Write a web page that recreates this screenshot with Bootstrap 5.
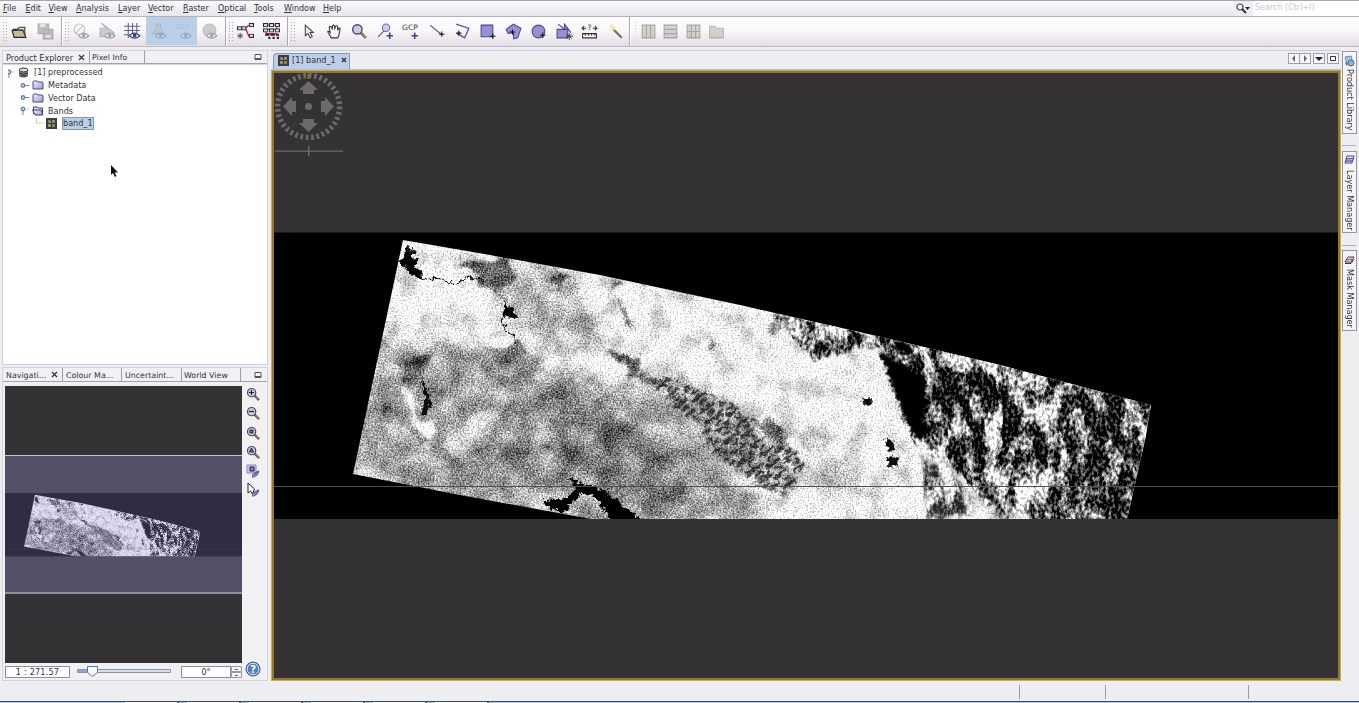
<!DOCTYPE html>
<html lang="en">
<head>
<meta charset="utf-8">
<title>[1] preprocessed</title>
<link href="https://cdn.jsdelivr.net/npm/bootstrap@5.3.0/dist/css/bootstrap.min.css" rel="stylesheet">
<style>
html,body{height:100%;overflow:hidden}
body{font:8.1px/12px "DejaVu Sans",sans-serif;color:#333138;background:#eeeef1}
svg{display:block;flex:none}
.menubar{height:16px;border-top:1px solid #a9a5ac;background:linear-gradient(#fbfafc,#e8e5eb);font-size:8px}
.menubar .entry{position:static;white-space:nowrap;line-height:15px}
.menubar .entry::first-letter{text-decoration:underline}
.finder{width:125px;height:15px;background:#fff;color:#c8c8d4}
.finder .glass{width:19px;background:#ededf2}
.tools{height:31px;border-top:1px solid #b5b2ba;border-bottom:1px solid #bdbac2;background:linear-gradient(#fdfcfd,#faf8fb 45%,#e2dde4)}
.seg{border-right:1px solid #aaa7af;box-shadow:1px 0 #fff;position:relative;overflow:visible}
.grip{width:5px;margin:4px 0 4px 2px;background:radial-gradient(circle,#a5a5ab 30%,transparent 45%) 0 0/3px 3px}
.slot{width:25.55px;height:28px}
.slot svg{width:17px;height:17px}
.slot.on{background:#bad0e9}
.off{opacity:.45}
.frame{border:1px solid #cdd5e4;background:#f1f1f4}
.tabrow{height:13px;border-bottom:1px solid #a3a2ab;line-height:14px}
.tabrow>div{border-right:1px solid #9f9da6;white-space:nowrap}
.tree{background:#fff;border-top:1px solid #d3d5de;padding:1px 0 0 5px}
.tree .line1{height:12.75px;white-space:nowrap}
.picked{background:#bccde8;border:1px solid #8298bd;line-height:11px}
.filetab{background:#bdcfe8;border:1px solid #8898b2;border-bottom:0;width:77px;height:16px;border-top-left-radius:4px;white-space:nowrap;padding-bottom:3px}
.ctl{width:12px;height:11px;border:1px solid #9ca0b4;background:#f5f6fa}
.canvas1{border:3px solid #91772f;outline:1px solid #c7ad50;outline-offset:-1px;background:#353235}
.vtab{width:15px;border:1px solid #9896a1;background:#f4f4f6;padding-top:3px}
.vtab span{writing-mode:vertical-rl;line-height:12px;white-space:nowrap}
.spacer1{width:14px;height:1px;background:#a8b1ca}
.field{height:12px;border:1px solid #8f8f9b;background:#fff;line-height:11px}
.status i{width:1px;height:14px;background:#969baa}
</style>
</head>
<body class="d-flex flex-column">
<svg width="0" height="0" class="position-absolute" aria-hidden="true">
<defs>
<linearGradient id="fold" x2="1" y2="1"><stop stop-color="#f0f0ff"/><stop offset="1" stop-color="#9b98dc"/></linearGradient>
<symbol id="folder" viewBox="0 0 12 10"><path d="M1 2q0-1 1-1h3l1 1h4q1 0 1 1v6H1z" fill="url(#fold)" stroke="#4c4a86"/></symbol>
<symbol id="folderopen" viewBox="0 0 12 10"><path d="M1.500 8V1h4l1 1h4v6" fill="#ddddf6" stroke="#3e3c62"/><path d="M.5 4H9l2 5H3z" fill="url(#fold)" stroke="#3e3c62"/></symbol>
<symbol id="band" viewBox="0 0 11 11"><rect width="11" height="11" fill="#3c3d42"/><path d="M2 2h3v3H2zM6 2h3v3H6zM2 6h3v3H2zM6 6h3v3H6z" fill="#82836c"/><path d="M7 2h1v2H7zM4 4h1v1H4zM2 7h2v1H2z" fill="#c9bd4d"/></symbol>
<symbol id="knob" viewBox="0 0 9 9"><circle cx="3" cy="4.500" r="1.700" fill="#dfe6f8" stroke="#6b7eae" stroke-width="1.400"/><path d="M5 4.500h4" stroke="#6b7eae"/></symbol>
<symbol id="knobv" viewBox="0 0 9 9"><circle cx="3" cy="3" r="1.700" fill="#dfe6f8" stroke="#6b7eae" stroke-width="1.400"/><path d="M3 5v4" stroke="#6b7eae"/><path d="M5 3h4" stroke="#c5c9d6"/></symbol>
<symbol id="mag" viewBox="0 0 16 16"><path d="m9 9 5 5" stroke="#6c5845" stroke-width="2.600"/><path d="m10 9.500 4 4" stroke="#c6a379"/><circle cx="6" cy="6" r="4.400" fill="#c9c9e4" stroke="#4a4a5c" stroke-width="1.300"/></symbol>
<symbol id="eye" viewBox="0 0 16 16"><path d="M5 12q4.500-5 10 0-5 4.500-10 0" fill="#eef" stroke="#39416d"/><circle cx="10" cy="11.800" r="1.700" fill="#39416d"/></symbol>
<symbol id="star" viewBox="0 0 7 7"><path d="M3.500 0v7M0 3.500h7M1 1l5 5M6 1 1 6" stroke="#333" stroke-width=".8"/></symbol>
<symbol id="node" viewBox="0 0 5 4"><rect x=".5" y=".5" width="4" height="3" fill="#dde" stroke="#223" /></symbol>
<symbol id="brush" viewBox="0 0 8 8"><path d="M0 7q0-4 7-6-1 5-5 6zM2 5l5-4" fill="#9795d2" stroke="#47477e" stroke-width=".8"/></symbol>

<!-- speckle of flat terrain -->
<filter id="land" filterUnits="userSpaceOnUse" x="340" y="230" width="830" height="295" color-interpolation-filters="sRGB">
<feTurbulence type="fractalNoise" baseFrequency=".045" numOctaves="5" seed="7" result="w"/>
<feDisplacementMap in="SourceGraphic" in2="w" scale="26" xChannelSelector="R" yChannelSelector="G" result="b"/>
<feColorMatrix in="w" values="0 0 1.7 0 -.35  0 0 1.7 0 -.35  0 0 1.7 0 -.35  0 0 0 0 1" result="m"/>
<feTurbulence type="fractalNoise" baseFrequency=".6" numOctaves="2" seed="3"/>
<feColorMatrix values="1.9 0 0 0 -.45  1.9 0 0 0 -.45  1.9 0 0 0 -.45  0 0 0 0 1" result="n"/>
<feComposite in="b" in2="m" operator="arithmetic" k2="1" k3=".8" k4="-.4" result="c"/>
<feComposite in="b" in2="n" operator="arithmetic" k2="1" k3="1" k4="-.5" result="d"/>
<feComposite in="c" in2="d" operator="arithmetic" k2=".5" k3=".56"/>
</filter>
<!-- streaked mountains -->
<filter id="peaks" filterUnits="userSpaceOnUse" x="600" y="230" width="570" height="295" color-interpolation-filters="sRGB">
<feTurbulence type="fractalNoise" baseFrequency=".065 .032" numOctaves="6" seed="31" result="w"/>
<feDisplacementMap in="SourceGraphic" in2="w" scale="30" xChannelSelector="R" yChannelSelector="B" result="b"/>
<feColorMatrix in="w" values="0 3 0 0 -1  0 3 0 0 -1  0 3 0 0 -1  0 0 0 0 1" result="m"/>
<feComposite in="b" in2="m" operator="arithmetic" k2="1" k3="1" k4="-.5" result="c"/>
<feTurbulence type="fractalNoise" baseFrequency=".33 .22" numOctaves="3" seed="5"/>
<feColorMatrix values="2.4 0 0 0 -.7  2.4 0 0 0 -.7  2.4 0 0 0 -.7  0 0 0 0 1" result="n"/>
<feComposite in="c" in2="n" operator="arithmetic" k2="1" k3=".75" k4="-.36" result="d"/>
<feComposite in="d" in2="b" operator="in"/>
</filter>
<filter id="rough" x="-20%" y="-20%" width="140%" height="140%"><feTurbulence type="fractalNoise" baseFrequency=".2" numOctaves="3" seed="2"/><feDisplacementMap in="SourceGraphic" scale="9" xChannelSelector="R" yChannelSelector="G"/></filter>
<filter id="b1"><feGaussianBlur stdDeviation=".9"/></filter>
<filter id="b3" x="-50%" y="-50%" width="200%" height="200%"><feGaussianBlur stdDeviation="2.500"/></filter>
<filter id="b9" x="-50%" y="-50%" width="200%" height="200%"><feGaussianBlur stdDeviation="8"/></filter>
<pattern id="ridges" width="37" height="13" patternUnits="userSpaceOnUse" patternTransform="rotate(-38)"><path d="M0 2h21M26 3h8M6 8.500h9M19 9h18" stroke="#0c0c0c" stroke-width="3.600"/></pattern>
<clipPath id="swath"><path d="M403 240 490 255 600 275 740 305 877 336 1000 365 1151 405 1145 440 1127 519H591L460 495 353 474Z"/></clipPath>
<g id="scene">
<rect x="200" y="232.500" width="1200" height="286.500"/>
<g clip-path="url(#swath)">
<g filter="url(#land)">
<rect x="330" y="220" width="850" height="310" fill="#eee"/>
<g filter="url(#b9)">
<path d="M370 350 405 335 450 345 520 350 570 372 640 392 690 420 735 480 780 525 590 525 480 505 340 480Z" fill="#9c9c9c"/>
<path d="M465 255 570 268 590 300 600 350 540 345 500 300Z" fill="#b0b0b0"/>
<path d="M530 385 600 395 660 450 700 500 640 525 560 460Z" fill="#747474"/>
<path d="M450 345 540 355 530 380 450 365ZM420 430 520 425 550 490 470 480ZM380 445 435 440 410 465Z" fill="#848484"/>
<path d="M800 420 830 450 870 490 820 500Z" fill="#b8b8b8"/>
<path d="M625 375 700 385 760 420 795 455 795 490 730 475 680 420Z" fill="#b4b4b4"/>
</g>
<g filter="url(#b3)">
<path d="M488 345 513 343 530 358 505 362ZM455 258 505 258 515 282 482 286Z" fill="#5e5e5e"/>
<path d="M398 360 440 354 425 372 408 384ZM608 356 637 350 642 376 624 366ZM550 276 573 273 565 290ZM538 445 548 445 550 460Z" fill="#484848"/>
<path d="M404 395 414 393 417 423 438 427 430 440 412 438Z" fill="#fff"/>
<path d="M440 440 490 405 500 415 455 470Z" fill="#c4c4c4"/>
<path d="M750 420 785 428 782 445 762 443Z" fill="#555"/>
<path d="M618 305l17 6-4 22-6-8ZM704 336h5l5 10-8-1ZM770 308l9 6 1 24-5-8ZM605 275l14 4-8 6ZM640 282h7v8zM380 400l6 2-3 12zM630 372l26 4 8 14-14-3Z" fill="#555"/>
</g>
</g>
<g filter="url(#peaks)">
<path d="M777 316Q822 322 880 339L890 352 850 347 815 356 785 335ZM873 338 903 370 914 438 945 460 985 500 1030 519 1032 530H1160L1180 410 1110 375 880 312Z" fill="#6e6e6e" filter="url(#b1)"/>
<path d="M920 340 945 345 940 390 925 376ZM945 362 979 360 996 390 984 436 955 412ZM1003 395 1016 390 1028 455 1013 480 1000 440ZM955 435 980 448 987 482 960 453Z" fill="#222" filter="url(#b3)"/>
<path d="M994 397 1005 405 1002 460 989 445ZM1036 376 1046 385 1054 428 1042 420ZM1059 435 1074 440 1070 480 1058 475ZM1028 455 1040 470 1046 515 1025 515ZM910 342 923 346 925 361ZM960 462 1000 495 1015 519 985 505ZM975 350 1050 372 1045 385 990 372Z" fill="#c4c4c4" filter="url(#b3)"/>
<path d="M1080 385 1128 390 1135 450 1125 530H1065L1070 440Z" fill="#282828" filter="url(#b3)"/>
<path d="M920 455 944 462 960 484 975 519H925L930 490Z" fill="#888" opacity=".85" filter="url(#b3)"/>
</g>
<g filter="url(#rough)">
<g filter="url(#b1)"><path d="M648 379 670 377 702 391 732 403 758 420 752 432 772 448 792 445 805 465 790 496 765 490 740 471 714 455 702 425 675 408Z" fill="url(#ridges)"/></g>
<path d="M878 351 900 362 926 377 927 400 924 418 929 430 920 441 905 422 899 402 889 378ZM893 340 906 342 914 356 898 350Z" fill="#060606" filter="url(#b1)"/>
<path d="M885 438 893 441 895 450 888 452ZM888 456 899 458 897 466 889 465ZM862 397 870 398 873 406 864 405Z" fill="#0a0a0a" stroke="#444"/>
<path d="M409 245 410 253 414 250 413 259 418 262 414 266 421 272 411 269 401 263 405 252ZM405 266 420 272 423 279 410 273Z" fill="#000" stroke="#111"/>
<path d="M423 279 438 278 452 284 470 278 483 279" fill="none" stroke="#111" stroke-width="1.300"/><path d="M483 279 491 289 507 300" fill="none" stroke="#444" stroke-width=".8"/><path d="M507 304 503 319 505 331 515 335 516 345" fill="none" stroke="#111" stroke-width="1.300"/>
<path d="M506 304 512 309 516 317 505 316Z" fill="#000" stroke="#000" stroke-width="2"/>
<path d="M420 376 429 392 430 405 427 416 421 415 425 400Z" fill="#080808"/>
<path d="M570 478 577 484 590 487 607 494 642 521 615 522 595 496 580 491 575 499 566 504 568 511 547 507 545 501 562 500 572 496 578 490Z" fill="#000" stroke="#000" stroke-width="2"/>
<path d="M585 475 589 464 600 457" fill="none" stroke="#222"/>
</g>
<path d="M399 466 430 442M790 425 805 450 830 475M750 405 780 412" fill="none" stroke="#ddd" stroke-width="1.500" opacity=".6" filter="url(#rough)"/>
</g>
<path d="M200 486.500h1200" stroke="#505052"/>
</g>
</defs>
</svg>

<nav class="menubar d-flex flex-shrink-0 position-relative">
<div class="entry" style="margin-left:3px;width:22.500px">File</div><div class="entry" style="width:23px">Edit</div><div class="entry" style="width:27.500px">View</div><div class="entry" style="width:42px">Analysis</div><div class="entry" style="width:30px">Layer</div><div class="entry" style="width:35px">Vector</div><div class="entry" style="width:35px">Raster</div><div class="entry" style="width:36px">Optical</div><div class="entry" style="width:30px">Tools</div><div class="entry" style="width:39px">Window</div><div class="entry">Help</div>
<div class="finder d-flex ms-auto"><div class="glass"><svg width="18" height="15"><path d="m8 8 4 4" stroke="#333" stroke-width="2"/><circle cx="6" cy="6" r="3" fill="#f0f0ff" stroke="#444" stroke-width="1.200"/><path d="M11 6h5l-2.500 3z" fill="#222"/></svg></div><span style="line-height:14px;padding-left:2px">Search (Ctrl+I)</span></div>
</nav>

<div class="tools d-flex flex-shrink-0">
<div class="seg d-flex" style="width:62px"><div class="grip" style="width:5px"></div>
<div class="slot d-flex align-items-center justify-content-center"><svg viewBox="0 0 16 16"><path d="M2 6h4l2-2h5v9H3z" fill="#eee5cf" stroke="#333"/><path d="m1 7 10-.500 3 7H3z" fill="#c9bb98" stroke="#222"/></svg></div>
<div class="slot d-flex align-items-center justify-content-center off"><svg viewBox="0 0 16 16"><path d="M1 1h10v9H1zM6 6h9v9H6z" fill="#777" stroke="#555"/><path d="M3 1h5v3H3zM8 11h5v3H8z" fill="#ccc"/></svg></div></div>
<div class="seg d-flex" style="width:164px"><div class="grip"></div>
<div class="slot d-flex align-items-center justify-content-center off"><svg viewBox="0 0 16 16"><circle cx="6" cy="6" r="5" fill="none" stroke="#777"/><path d="m2 10 8-8" stroke="#777"/><use href="#eye"/></svg></div>
<div class="slot d-flex align-items-center justify-content-center off"><svg viewBox="0 0 16 16"><path d="M1 5h6L2 0l12 9v4H1z" fill="#999" stroke="#666"/><use href="#eye"/></svg></div>
<div class="slot d-flex align-items-center justify-content-center"><svg viewBox="0 0 16 16"><path d="M4 0v14M8 0v14M12 0v10M0 3h15M0 7h15M0 11h7" stroke="#5c628d"/><use href="#eye"/></svg></div>
<div class="slot on d-flex align-items-center justify-content-center"><svg class="off" viewBox="0 0 16 16"><path d="M6 1h4v4l3 5H2l4-5z" fill="#c8bfb0" stroke="#999"/><use href="#eye" opacity=".6"/></svg></div>
<div class="slot on d-flex align-items-center justify-content-center"><svg class="off" viewBox="0 0 16 16"><text x="0" y="6" font-size="6.500" fill="#aa9c8e">GCP</text><use href="#eye" opacity=".6"/></svg></div>
<div class="slot d-flex align-items-center justify-content-center off"><svg viewBox="0 0 16 16"><circle cx="8" cy="7" r="6" fill="#999" stroke="#777"/><use href="#eye"/></svg></div></div>
<div class="seg d-flex" style="width:62px"><div class="grip"></div>
<div class="slot d-flex align-items-center justify-content-center"><svg viewBox="0 0 16 16"><path d="M5 5h3l3-3M8 5l3 7h2" fill="none" stroke="#c22b32" stroke-width="1.300"/><use href="#node" y="3" width="5" height="4"/><use href="#node" x="4" y="3" width="5" height="4"/><use href="#node" x="11" width="5" height="4"/><use href="#node" x="11" y="10" width="5" height="4"/><use href="#star" x="0" y="9" width="6" height="6"/></svg></div>
<div class="slot d-flex align-items-center justify-content-center"><svg viewBox="0 0 16 16"><path d="M3 2h10v4H3v4h10" fill="none" stroke="#c22b32"/><g id="nr"><use href="#node" width="5" height="4"/><use href="#node" x="5.500" width="5" height="4"/><use href="#node" x="11" width="5" height="4"/></g><use href="#nr" y="5"/><g fill="#222"><path d="M2 10h4v2H2zM7 10h4v2H7zM12 10h3v2h-3zM5 13h2v2H5zM9 13h2v2H9zM13 13h2v2h-2z"/></g></svg></div></div>
<div class="seg d-flex" style="width:342px"><div class="grip" style="width:6px"></div>
<div class="slot d-flex align-items-center justify-content-center"><svg viewBox="0 0 16 16"><path d="M5 2v10l2.500-2 2 4 2-1-2-4h3z" fill="#eee" stroke="#444"/></svg></div>
<div class="slot d-flex align-items-center justify-content-center"><svg viewBox="0 0 16 16"><path d="M5 14 2 9q-1-2 1-1l1 1-1-5q1-2 2 0l1 2V3q1-2 2 0v3l1-3q2-1 2 1v3l1-2q2-1 1 2l-1 5-1 2z" fill="#fff" stroke="#333"/></svg></div>
<div class="slot d-flex align-items-center justify-content-center"><svg><use href="#mag" width="17" height="17"/></svg></div>
<div class="slot d-flex align-items-center justify-content-center"><svg viewBox="0 0 16 16"><path d="m1 13 6-6" stroke="#555"/><circle cx="8.500" cy="4.500" r="3.500" fill="#c9c9f3" stroke="#6e6cab"/><path d="M12 9v6M9 12h6" stroke="#44428a" stroke-width="1.400"/></svg></div>
<div class="slot d-flex align-items-center justify-content-center"><svg viewBox="0 0 16 16"><text x="0" y="6.500" font-size="7" textLength="15" lengthAdjust="spacingAndGlyphs" fill="#333">GCP</text><path d="M12 9v6M9 12h6" stroke="#44428a" stroke-width="1.400"/></svg></div>
<div class="slot d-flex align-items-center justify-content-center"><svg viewBox="0 0 16 16"><path d="m2 2 11 9" stroke="#5553a0" stroke-width="1.200"/><path d="M13 8v5M10.500 10.500h5" stroke="#111"/></svg></div>
<div class="slot d-flex align-items-center justify-content-center"><svg viewBox="0 0 16 16"><path d="m2 1 12 4-4 9-7-4" fill="none" stroke="#5553a0" stroke-width="1.200"/><path d="M4.500 7v5M2 9.500h5" stroke="#111"/></svg></div>
<div class="slot d-flex align-items-center justify-content-center"><svg viewBox="0 0 16 16"><path d="M2 2h11v11H2z" fill="#9692d2" stroke="#4b4895"/><path d="M13 10v5M10.500 12.500h5" stroke="#111"/></svg></div>
<div class="slot d-flex align-items-center justify-content-center"><svg viewBox="0 0 16 16"><path d="m1 6 7-5 7 4-3 9-4 1V9L3 10z" fill="#9692d2" stroke="#4b4895"/><path d="M7 6v5M4.500 8.500h5" stroke="#111"/></svg></div>
<div class="slot d-flex align-items-center justify-content-center"><svg viewBox="0 0 16 16"><circle cx="8" cy="8" r="6" fill="#9692d2" stroke="#4b4895"/><path d="M12 9v5M9.500 11.500h5" stroke="#111"/></svg></div>
<div class="slot d-flex align-items-center justify-content-center"><svg viewBox="0 0 16 16"><path d="M1 6h10v8H1zM2 1l6 5V1l6 8" fill="#9692d2" stroke="#4b4895"/><use href="#star" x="9" y="9" width="7" height="7"/></svg></div>
<div class="slot d-flex align-items-center justify-content-center"><svg viewBox="0 0 16 16"><path d="M1 5h4M11 5h4M3 3 1 5l2 2M13 3l2 2-2 2M1.500 10h13v4h-13z" fill="#fff" stroke="#333"/><path d="M4 10v2M7 10v2M10 10v2M13 10v2" stroke="#333"/><text x="6" y="7" font-size="7" fill="#222">?</text></svg></div>
<div class="slot d-flex align-items-center justify-content-center"><svg viewBox="0 0 16 16"><path d="m6 6 8 8" stroke="#77766c" stroke-width="2"/><path d="M5 1v7M2 4.500h6M3 2l4 5" stroke="#eee486"/></svg></div></div>
<div class="d-flex off"><div class="grip ms-1 me-0" style="width:3px"></div>
<div class="slot d-flex align-items-center justify-content-center" style="width:22.600px"><svg viewBox="0 0 16 16"><path d="M2 2h12v12H2zM6 2v12M10 2v12" fill="#aaa58f" stroke="#444"/></svg></div><div class="slot d-flex align-items-center justify-content-center" style="width:22.600px"><svg viewBox="0 0 16 16"><path d="M2 2h12v12H2zM2 6h12M2 10h12" fill="#aaa58f" stroke="#444"/></svg></div><div class="slot d-flex align-items-center justify-content-center" style="width:22.600px"><svg viewBox="0 0 16 16"><path d="M2 2h12v12H2zM2 8h12M6 2v12M10 2v12" fill="#aaa58f" stroke="#444"/></svg></div><div class="slot d-flex align-items-center justify-content-center" style="width:22.600px"><svg viewBox="0 0 16 16"><path d="M1.500 3h5l1 2h7v9h-13z" fill="#aaa58f" stroke="#666"/></svg></div></div>
</div>

<main class="d-flex flex-grow-1" style="padding:3px 2px 2px 2px;min-height:0">
<aside class="d-flex flex-column" style="width:266px">
<section class="frame d-flex flex-column" style="height:315px">
<div class="tabrow d-flex"><div class="d-flex" style="width:87px;padding-left:3px"><span>Product Explorer</span><svg class="ms-auto me-1" width="7" height="12"><path d="m1 4 5 5M6 4 1 9" stroke="#333" stroke-width="1.200"/></svg></div><div style="width:55px;padding-left:2px;font-size:7.800px">Pixel Info</div><svg class="ms-auto me-1" width="9" height="12"><path d="M1 3.500h6v5H1zM1 7.500h6" fill="#fff" stroke="#555"/></svg></div>
<div class="tree flex-grow-1 mt-auto">
<div class="line1 d-flex align-items-center"><svg width="10" height="12"><use href="#knobv" x="-2" y="3" width="9" height="9"/></svg><svg width="11" height="11"><ellipse cx="5.500" cy="8" rx="4.500" ry="2.500" fill="#555"/><path d="M1 3v5h9V3" fill="#888"/><ellipse cx="5.500" cy="3" rx="4.500" ry="2" fill="#d8d8dd" stroke="#333"/><path d="M1 6q4 3 9 0" fill="none" stroke="#222"/></svg><span style="margin-left:5px">[1] preprocessed</span></div>
<div class="line1 d-flex align-items-center" style="padding-left:12px"><svg width="9" height="9"><use href="#knob"/></svg><svg width="12" height="10" style="margin-left:3px"><use href="#folder"/></svg><span style="margin-left:4px">Metadata</span></div>
<div class="line1 d-flex align-items-center" style="padding-left:12px"><svg width="9" height="9"><use href="#knob"/></svg><svg width="12" height="10" style="margin-left:3px"><use href="#folder"/></svg><span style="margin-left:4px">Vector Data</span></div>
<div class="line1 d-flex align-items-center" style="padding-left:12px"><svg width="9" height="9"><use href="#knobv"/></svg><svg width="12" height="10" style="margin-left:3px"><use href="#folderopen"/></svg><span style="margin-left:4px">Bands</span></div>
<div class="line1 d-flex align-items-center" style="padding-left:28px"><svg width="8" height="10"><path d="M.500 0v5h7" fill="none" stroke="#c9c9d2"/></svg><svg width="11" height="11" style="margin-left:2px"><use href="#band"/></svg><span class="picked" style="margin-left:5px">band_1</span></div>
</div></section>
<section class="frame d-flex flex-column flex-grow-1" style="margin-top:2px">
<div class="tabrow d-flex" style="font-size:7.900px;height:14px;line-height:15px"><div class="d-flex" style="width:60px;padding-left:3px">Navigati...<svg class="ms-auto me-1" width="7" height="13"><path d="m1 4 5 5M6 4 1 9" stroke="#333" stroke-width="1.200"/></svg></div><div style="width:59px;padding-left:3px">Colour Ma...</div><div style="width:60px;padding-left:3px">Uncertaint...</div><div style="width:59px;padding-left:2px">World View</div><svg class="ms-auto me-1" width="9" height="13"><path d="M1 4.500h6v5H1zM1 8.500h6" fill="#fff" stroke="#555"/></svg></div>
<div class="d-flex" style="padding:4px 0 0 2px">
<svg width="237" height="277" viewBox="5 386 237 277"><rect x="5" y="386" width="237" height="277" fill="#353235"/><use href="#scene" transform="translate(-53.900 441.900) scale(.2206)"/><rect x="5" y="456" width="237" height="137" fill="#a096dc" opacity=".3"/><path d="M5 455.500h237" stroke="#c5c3ce"/><path d="M5 593h237" stroke="#8f8c9e" stroke-width="2"/></svg>
<div class="d-flex flex-column" style="padding:1px 0 0 4px;gap:4.300px">
<svg width="15" height="15"><use href="#mag"/><path d="M5.500 3v5M3 5.500h5" stroke="#222" stroke-width="1.200"/></svg>
<svg width="15" height="15"><use href="#mag"/><path d="M3 5.500h5" stroke="#222" stroke-width="1.200"/></svg>
<svg width="15" height="15"><use href="#mag"/><path d="M4 4h3v3H4z" fill="#778" stroke="#224"/></svg>
<svg width="15" height="15"><use href="#mag"/><path d="m3.500 7 2-4 2 4z" fill="#778" stroke="#224"/></svg>
<svg width="15" height="15"><path d="M1 1h9v8H1z" fill="#c7c7ec" stroke="#8987c2"/><path d="M4 3h4v4H4z" fill="#888ab1" stroke="#223"/><use href="#brush" x="6" y="6" width="8" height="8"/></svg>
<svg width="15" height="15"><path d="M2 0v10l2.500-2 2 3 2-5z" fill="#fff" stroke="#222"/><use href="#brush" x="6" y="6" width="8" height="8"/></svg>
</div></div>
<div class="d-flex" style="padding:3px 3px 0 2px"><div class="field text-center" style="width:65px;letter-spacing:.2px">1 : 271.57</div>
<svg width="95" height="13" style="margin:-1px 0 0 7px"><path d="M.500 4.500h93v3H.5z" fill="#d9dfeb" stroke="#8c94aa"/><path d="M1 6h14" stroke="#8fa9d2" stroke-width="2"/><path d="M10.500 1.500h10v6l-5 4-5-4z" fill="#f4f7fc" stroke="#65748f"/></svg>
<div class="field text-center" style="width:50px;margin-left:9px">0°</div><svg width="11" height="12"><path d="M.500.500h10v5H.5zM.500 6.500h10v5H.5z" fill="#f2f2f7" stroke="#999bab"/><path d="M4 3.500h3M4 9.500h3" stroke="#667"/></svg>
<svg width="16" height="16" style="margin:-5px 0 0 3px"><circle cx="8" cy="8" r="7" fill="#557fb8" stroke="#385887"/><circle cx="8" cy="8" r="5.800" fill="none" stroke="#d9e6f7"/><text x="5.200" y="11.700" font-size="10" font-weight="bold" fill="#fff">?</text></svg></div>
</section></aside>

<section class="d-flex flex-column" style="width:1070px;margin-left:3px;border-top:1px solid #c1cedd">
<div class="d-flex" style="height:19px;padding-top:2px;border-bottom:1px solid #afbcd1">
<div class="filetab d-flex align-items-center" style="margin-left:2px"><svg width="11" height="11" style="margin-left:4px"><use href="#band"/></svg><span style="margin-left:3px">[1] band_1</span><svg width="6" height="8" style="margin-left:5px"><path d="m1 2 4 4M5 2 1 6" stroke="#333" stroke-width="1.400"/></svg></div>
<div class="d-flex ms-auto" style="padding-right:2px"><div class="ctl"><svg width="10" height="9"><path d="m6 1-3 3.500 3 3.500z" fill="#666"/></svg></div><div class="ctl" style="margin-left:-1px"><svg width="10" height="9"><path d="m4 1 3 3.500-3 3.500z" fill="#666"/></svg></div><div class="ctl" style="margin-left:2px"><svg width="10" height="9"><path d="M1 3h8L5 7z" fill="#222"/></svg></div><div class="ctl" style="margin-left:2px"><svg width="10" height="9"><path d="M2.500 2.500h5v4h-5z" fill="#fff" stroke="#333"/></svg></div></div></div>
<div class="canvas1 flex-grow-1"><svg width="100%" height="100%" viewBox="274 73 1064 605" preserveAspectRatio="xMinYMin slice">
<use href="#scene"/>
<g fill="#6c6b6b"><circle cx="308.500" cy="106.500" r="31" fill="none" stroke="#6c6b6b" stroke-width="5.500" stroke-dasharray="2.700 2.710"/><path id="arr" d="m308.500 81 9.500 9h-4v4h-11v-4h-4z"/><use href="#arr" transform="rotate(90 308.500 106.500)"/><use href="#arr" transform="rotate(180 308.500 106.500)"/><use href="#arr" transform="rotate(270 308.500 106.500)"/><circle cx="308.500" cy="106.500" r="3.600"/><path d="M275 150.500h68v1.200h-68zM308 146h1.500v10H308z"/><path d="M307.500 74h2v5h-2z" fill="#8a722a"/></g></svg></div>
</section>

<aside class="d-flex flex-column align-items-start" style="margin-left:1px">
<div class="vtab d-flex flex-column align-items-center" style="height:83px;margin-top:1px"><svg width="11" height="13"><path d="m1 2 6-1 2 7-6 1z" fill="#9bc8e5" stroke="#789"/><circle cx="7" cy="8" r="3" fill="#8cb2d6" stroke="#568"/><path d="m1 7 4 1-3 3z" fill="#58a"/></svg><span style="margin-top:1px">Product Library</span></div>
<div class="spacer1" style="margin:11px 0 5px"></div>
<div class="vtab d-flex flex-column align-items-center" style="height:82px"><svg width="11" height="12"><path d="M3 1h7L8 8H1z" fill="#f2f2ff" stroke="#424080"/><path d="m2 4 7-.500M1.500 6H9" stroke="#5e5ba8" stroke-width="1.500"/></svg><span style="margin-top:3px">Layer Manager</span></div>
<div class="spacer1" style="margin:12px 0 4px"></div>
<div class="vtab d-flex flex-column align-items-center" style="height:81px"><svg width="11" height="12"><path d="M4 3h6L7 8H1z" fill="#fff" stroke="#34345a"/><path d="m3 6 5-1" stroke="#c45454" stroke-width="1.500"/><path d="M1 9.500h6l3-4" fill="none" stroke="#34345a"/></svg><span style="margin-top:3px">Mask Manager</span></div>
</aside>
</main>

<footer class="status d-flex align-items-center flex-shrink-0" style="height:18px"><i style="margin-left:1019px"></i><i style="margin-left:85px"></i><i style="margin-left:142px"></i></footer>
<div class="d-flex flex-shrink-0" style="height:2px;border-top:1px solid #344b68;background:#b6c8dd"><div style="margin-left:125px;width:368px;background:repeating-linear-gradient(90deg,#fff 0 52px,#667 52px 54px,#b6c8dd 54px 62px)"></div></div>
<svg class="position-absolute" style="left:110px;top:165px" width="9" height="13"><path d="M1 0v10l2-2 2 4 1.500-1-1.800-3.500H8z" fill="#111"/></svg>
</body>
</html>
